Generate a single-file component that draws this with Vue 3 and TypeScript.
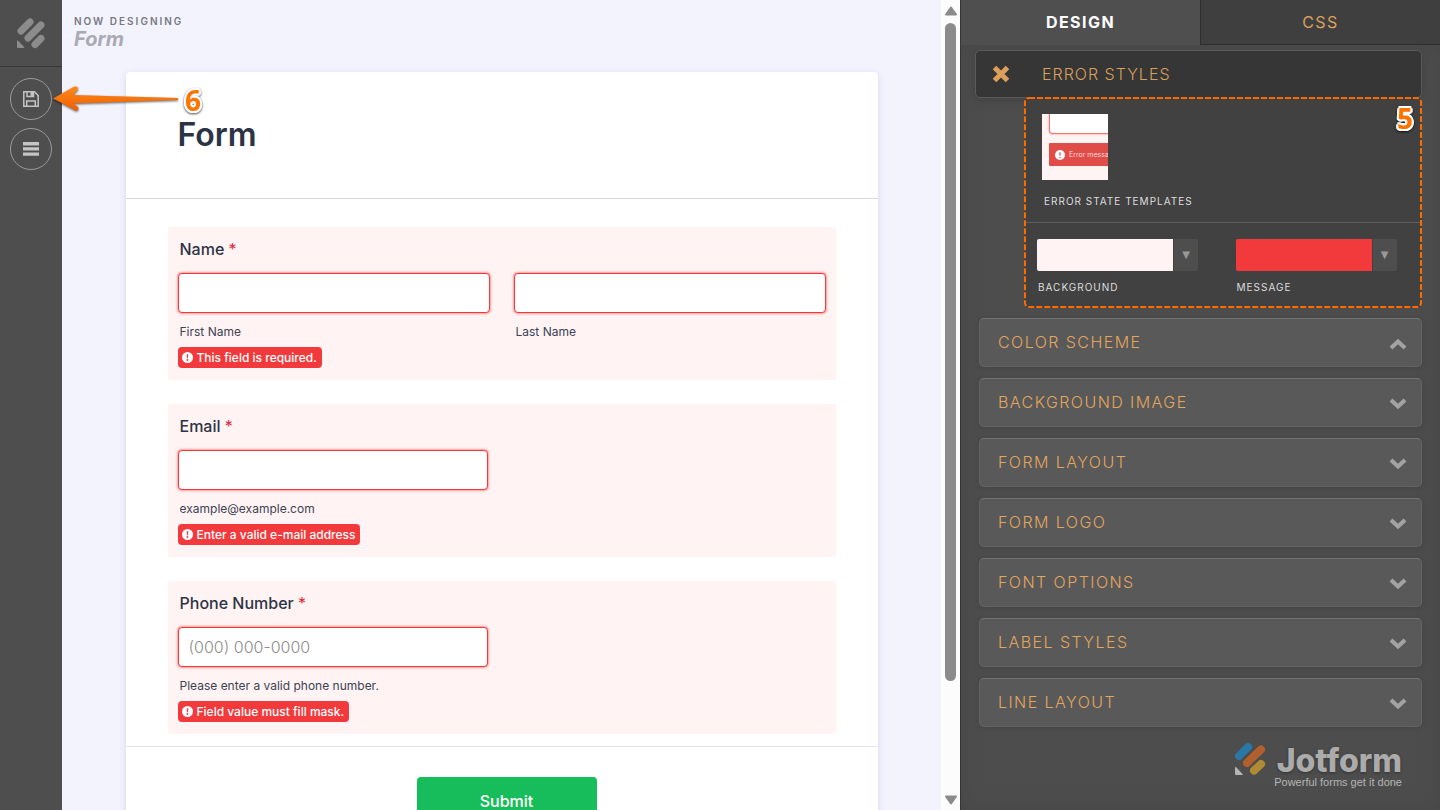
<script setup lang="ts">
import { ref } from 'vue'

interface Section {
  title: string
  open: boolean
}

const sections = ref<Section[]>([
  { title: 'Color Scheme', open: true },
  { title: 'Background Image', open: false },
  { title: 'Form Layout', open: false },
  { title: 'Form Logo', open: false },
  { title: 'Font Options', open: false },
  { title: 'Label Styles', open: false },
  { title: 'Line Layout', open: false },
])

interface Field {
  id: string
  label: string
  inputs: { id: string; sub: string; placeholder: string; type: string }[]
  error: string
}

const fields: Field[] = [
  {
    id: 'name',
    label: 'Name',
    inputs: [
      { id: 'first', sub: 'First Name', placeholder: '', type: 'text' },
      { id: 'last', sub: 'Last Name', placeholder: '', type: 'text' },
    ],
    error: 'This field is required.',
  },
  {
    id: 'email',
    label: 'Email',
    inputs: [{ id: 'mail', sub: 'example@example.com', placeholder: '', type: 'email' }],
    error: 'Enter a valid e-mail address',
  },
  {
    id: 'phone',
    label: 'Phone Number',
    inputs: [{ id: 'tel', sub: 'Please enter a valid phone number.', placeholder: '(000) 000-0000', type: 'tel' }],
    error: 'Field value must fill mask.',
  },
]
</script>

<template>
  <div class="app">
    <aside class="rail">
      <a class="rail-logo" href="#" aria-label="Home">
        <svg width="30" height="32" viewBox="0 0 30 32">
          <g stroke="#8c8c8c" stroke-width="7" stroke-linecap="round">
            <path d="M5 14 14 5" />
            <path d="M12 21 25 8" />
            <path d="M19 27.500 25 21.500" />
          </g>
          <path d="M1 24.500v5.500q0 1 1 1h5.500q1.500 0 .5-1l-5.500-6q-1.500-1-1.500.5Z" fill="#8c8c8c" />
        </svg>
      </a>
      <nav class="rail-tools">
        <button class="tool" aria-label="Save">
          <svg width="18" height="18" viewBox="0 0 18 18" fill="none" stroke="#c4c4c4" stroke-width="1.500">
            <path d="M1.800 1.800h10.700l3.700 3.700v10.700H1.800Z" />
            <path d="M5 2v4.500h6.500V2M4.700 16v-5h8.600v5" />
            <path d="M8.500 2h2.500v4h-2.500Z" fill="#c4c4c4" stroke="none" />
          </svg>
        </button>
        <button class="tool" aria-label="Menu">
          <svg width="16" height="14" viewBox="0 0 16 14" fill="#c4c4c4">
            <path d="M0 0h16v3.400H0ZM0 5.200h16v3.400H0ZM0 10.400h16v3.400H0Z" />
          </svg>
        </button>
      </nav>
    </aside>

    <main class="stage">
      <header class="stage-head">
        <span class="now">NOW DESIGNING</span>
        <span class="form-name">Form</span>
      </header>
      <form class="card" novalidate @submit.prevent>
        <div class="card-head"><h1>Form</h1></div>
        <div class="fields">
          <section v-for="f in fields" :key="f.id" class="field">
            <label class="field-label" :for="f.inputs[0].id">{{ f.label }} <span class="star">*</span></label>
            <div class="inputs">
              <div v-for="i in f.inputs" :key="i.id" class="input-col" :class="{ single: f.inputs.length === 1 }">
                <input :id="i.id" :type="i.type" :placeholder="i.placeholder" />
                <label class="sub" :for="i.id">{{ i.sub }}</label>
              </div>
            </div>
            <p class="error">
              <svg width="11" height="11" viewBox="0 0 11 11">
                <circle cx="5.500" cy="5.500" r="5.500" fill="#fff" />
                <path d="M4.700 2.200h1.600L6 6.200H5Z" fill="#f23a3c" />
                <circle cx="5.500" cy="8" r=".9" fill="#f23a3c" />
              </svg>
              {{ f.error }}
            </p>
          </section>
        </div>
        <div class="card-foot"><button class="submit" type="submit">Submit</button></div>
      </form>
    </main>

    <div class="scrollbar">
      <svg width="14" height="10" viewBox="0 0 14 10"><path d="M7 1.500 12 8.500H2Z" fill="#8b8b8b" stroke="#8b8b8b" stroke-width="2" stroke-linejoin="round" /></svg>
      <div class="track"><div class="thumb"></div></div>
      <svg width="14" height="10" viewBox="0 0 14 10"><path d="M7 8.500 12 1.500H2Z" fill="#8b8b8b" stroke="#8b8b8b" stroke-width="2" stroke-linejoin="round" /></svg>
    </div>

    <aside class="panel">
      <div class="tabs">
        <button class="tab active">DESIGN</button>
        <button class="tab">CSS</button>
      </div>
      <div class="panel-body">
        <div class="error-head">
          <button class="close" aria-label="Close error styles">
            <svg width="18" height="18" viewBox="0 0 18 18" stroke="#dba05c" stroke-width="5"><path d="M2.500 2.500l13 13M15.500 2.500l-13 13" /></svg>
          </button>
          <h2>ERROR STYLES</h2>
        </div>
        <div class="error-box">
          <svg class="dashes" width="100%" height="100%"><rect class="dash-rect" x="1" y="1" rx="4" /></svg>
          <span class="step step-five">5</span>
          <div class="templates">
            <button class="thumbnail" aria-label="Error state template">
              <span class="thumb-input"></span>
              <span class="thumb-error">
                <svg width="10" height="10" viewBox="0 0 10 10"><circle cx="5" cy="5" r="5" fill="#fff" /><path d="M5 2.200v3.500M5 7v1.200" stroke="#e04c48" stroke-width="1.200" /></svg>
                Error message
              </span>
            </button>
            <span class="caption">ERROR STATE TEMPLATES</span>
          </div>
          <div class="colors">
            <div class="color">
              <button class="picker" aria-labelledby="cap-bg"><span class="swatch pale"></span><span class="arrow">▼</span></button>
              <span id="cap-bg" class="caption">BACKGROUND</span>
            </div>
            <div class="color">
              <button class="picker" aria-labelledby="cap-msg"><span class="swatch red"></span><span class="arrow">▼</span></button>
              <span id="cap-msg" class="caption">MESSAGE</span>
            </div>
          </div>
        </div>
        <div class="accordion">
          <button v-for="s in sections" :key="s.title" class="section" :aria-expanded="s.open" @click="s.open = !s.open">
            {{ s.title }}
            <svg width="18" height="12" viewBox="0 0 18 12" fill="none" stroke="#a3a3a3" stroke-width="4">
              <path :d="s.open ? 'M2 10 9 3.500l7 6.500' : 'M2 2l7 6.500L16 2'" />
            </svg>
          </button>
        </div>
        <footer class="brand">
          <svg width="32" height="34" viewBox="0 0 32 34">
            <g stroke-width="8" stroke-linecap="round">
              <path d="M5 14 14 5" stroke="#2b77a8" />
              <path d="M13 21 27 7.500" stroke="#b0602c" />
              <path d="M20 28.500 27 22" stroke="#b08a35" />
            </g>
            <path d="M1 25.500v6.500q0 1 1 1h6q1.500 0 .5-1l-6-6.500q-1.500-1-1.500 0Z" fill="#b5b5b5" />
          </svg>
          <div class="brand-text">
            <span class="wordmark">Jotform</span>
            <span class="tagline">Powerful forms get it done</span>
          </div>
        </footer>
      </div>
    </aside>

    <div class="callout">
      <svg width="128" height="30" viewBox="0 0 128 30">
        <defs>
          <linearGradient id="arrowFill" x1="0" y1="0" x2="0" y2="1">
            <stop offset="0" stop-color="#ff8a1c" />
            <stop offset="1" stop-color="#ee5f00" />
          </linearGradient>
        </defs>
        <path d="M0 17.500 21 5.800q2.500-1 3.800.8.800 1.700-.8 3.200l-4 4.200L125 17v2L20 22.500l4.500 3q1.500 1.500.6 3.200-1 1.500-3 .6Z" fill="url(#arrowFill)" />
      </svg>
      <span class="step">6</span>
    </div>
  </div>
</template>

<style>
html,
body {
  margin: 0;
  overflow: hidden;
}
</style>

<style scoped>
.app,
.app * {
  box-sizing: border-box;
}
.app {
  position: relative;
  display: flex;
  height: 100vh;
  overflow: hidden;
  background: #f3f3fe;
  font-family: Inter, 'Liberation Sans', sans-serif;
  color: #2c3345;
}
button {
  margin: 0;
  padding: 0;
  border: 0;
  background: none;
  font: inherit;
  color: inherit;
  cursor: pointer;
}
h1,
h2,
p {
  margin: 0;
}

.rail {
  width: 62px;
  flex: none;
  background: #4e4e4e;
}
.rail-logo {
  display: flex;
  justify-content: center;
  height: 67px;
  padding-top: 17px;
  border-bottom: 1px solid #383838;
}
.rail-tools {
  display: flex;
  flex-direction: column;
  align-items: center;
  gap: 8px;
  padding-top: 11px;
}
.tool {
  display: flex;
  align-items: center;
  justify-content: center;
  width: 42px;
  height: 42px;
  border: 1px solid #9a9a9a;
  border-radius: 50%;
}

.stage {
  flex: 1;
  min-width: 0;
  overflow: hidden;
}
.stage-head {
  display: flex;
  flex-direction: column;
  height: 72px;
  padding: 15px 12px 0;
}
.now {
  font-size: 10px;
  line-height: 12px;
  font-weight: 600;
  letter-spacing: 2px;
  color: #777882;
}
.form-name {
  font-size: 20px;
  line-height: 24px;
  font-weight: 700;
  font-style: italic;
  color: #a9aab2;
}
.card {
  width: calc(100% - 48px);
  max-width: 752px;
  margin: 0 auto;
  border-radius: 4px;
  background: #fff;
  box-shadow: 0 2px 6px rgba(90, 90, 190, 0.2);
}
.card-head {
  padding: 42px 52px;
  border-bottom: 1px solid #d7d8e1;
}
h1 {
  font-size: 32px;
  line-height: 42px;
  font-weight: 600;
}
.fields {
  display: flex;
  flex-direction: column;
  gap: 24px;
  padding: 28px 42px 12px;
}
.field {
  padding: 12px 10px;
  border-radius: 3px;
  background: #fff4f3;
}
.field-label {
  display: block;
  padding: 0 2px;
  margin-bottom: 14px;
  font-size: 16px;
  line-height: 20px;
  font-weight: 500;
}
.star {
  font-weight: 400;
  color: #dc2a3c;
}
.inputs {
  display: grid;
  grid-template-columns: 1fr 1fr;
  gap: 24px;
}
.single {
  width: calc(100% - 2px);
}
input {
  display: block;
  width: 100%;
  height: 40px;
  padding: 0 10px;
  border: 1px solid #f23a3c;
  border-radius: 4px;
  outline: 0;
  background: #fff;
  box-shadow: 0 0 3px #f23a3c;
  font: 300 16px Inter, sans-serif;
  color: #2c3345;
}
input::placeholder {
  color: #8d8d8d;
  opacity: 1;
}
.sub {
  display: block;
  padding: 0 2px;
  margin: 11px 0 7px;
  font-size: 12px;
  line-height: 16px;
  color: #3c4254;
}
.error {
  display: flex;
  align-items: center;
  gap: 4px;
  width: fit-content;
  padding: 0 5px 0 4px;
  border-radius: 4px;
  background: #f23a3c;
  font-size: 12px;
  line-height: 21px;
  font-weight: 500;
  color: #fff;
}
.card-foot {
  display: flex;
  justify-content: center;
  padding: 30px 42px;
  border-top: 1px solid #e3e5f5;
}
.submit {
  width: 180px;
  margin-left: 10px;
  border-radius: 4px;
  background: #18bd5b;
  font-size: 16px;
  line-height: 48px;
  font-weight: 500;
  color: #fff;
}

.scrollbar {
  display: flex;
  flex-direction: column;
  align-items: center;
  gap: 7px;
  width: 19px;
  flex: none;
  padding: 6px 0 5px;
  background: #fcfcfc;
}
.scrollbar svg {
  flex: none;
}
.track {
  flex: 1;
  width: 11px;
}
.thumb {
  height: 86%;
  border-radius: 6px;
  background: #8b8b8b;
}

.panel {
  display: flex;
  flex-direction: column;
  width: 480px;
  flex: none;
  border-left: 1px solid #353535;
  background: #4d4d4d;
}
.tabs {
  display: grid;
  grid-template-columns: 1fr 1fr;
  margin-left: -1px;
}
.tab {
  height: 45px;
  border-left: 1px solid #2f2f2f;
  border-bottom: 1px solid #2f2f2f;
  background: #3f3f3f;
  font-size: 16px;
  letter-spacing: 0.09em;
  color: #dba05c;
}
.tab.active {
  border-left-color: #353535;
  border-bottom-color: #4f4f4f;
  background: #4f4f4f;
  font-weight: 700;
  color: #fff;
}
.panel-body {
  flex: 1;
  padding: 5px 18px 0 14px;
  box-shadow: inset 0 0 20px #474747;
}
.error-head {
  display: flex;
  align-items: center;
  height: 48px;
  border: 1px solid #5a5a5a;
  border-radius: 5px;
  background: #363636;
  box-shadow: 0 3px 10px #424242;
}
.close {
  display: flex;
  width: 66px;
  padding-left: 16px;
}
h2 {
  font-size: 16px;
  font-weight: 300;
  letter-spacing: 1px;
  color: #dba05c;
}
.error-box {
  position: relative;
  margin: -1px 0 10px 49px;
  padding: 2px;
  border-radius: 5px;
  background: #414141;
}
.dashes {
  position: absolute;
  inset: 0;
}
.dash-rect {
  width: calc(100% - 2px);
  height: calc(100% - 2px);
  fill: none;
  stroke: #ff6a00;
  stroke-width: 2px;
  stroke-dasharray: 6 2;
}
.step {
  font-family: 'Open Sans', sans-serif;
  font-size: 28px;
  line-height: 36px;
  font-weight: 700;
  color: #ff7300;
  text-shadow:
    2px 0 #fff,
    -2px 0 #fff,
    0 2px #fff,
    0 -2px #fff,
    1px 2px #fff,
    -1px 2px #fff,
    1px -2px #fff,
    -1px -2px #fff,
    2px 1px #fff,
    -2px 1px #fff;
  filter: drop-shadow(0 1px 1px rgba(0, 0, 0, 0.7));
}
.step-five {
  position: absolute;
  top: 3px;
  right: 9px;
}
.templates {
  display: flex;
  flex-direction: column;
  align-items: flex-start;
  gap: 14px;
  padding: 15px 16px 14px;
  border-bottom: 1px solid #606060;
}
.templates .caption {
  padding-left: 2px;
}
.thumbnail {
  display: flex;
  flex-direction: column;
  align-items: flex-start;
  gap: 9px;
  width: 66px;
  height: 66px;
  padding-left: 7px;
  overflow: hidden;
  background: #fff4f3;
}
.thumb-input {
  width: 90px;
  height: 20px;
  border: 1px solid #ee7774;
  border-top: 0;
  border-radius: 0 0 4px 4px;
  background: #fff;
  box-shadow: 0 0 2px #ee7774;
}
.thumb-error {
  display: flex;
  align-items: center;
  gap: 4px;
  width: 90px;
  padding-left: 6px;
  border-radius: 1px;
  background: #e04c48;
  font-size: 7px;
  line-height: 23px;
  white-space: nowrap;
  color: #ffdcdb;
}
.thumb-error svg {
  flex: none;
}
.caption {
  font-size: 10px;
  line-height: 14px;
  letter-spacing: 1px;
  color: #dedede;
}
.colors {
  display: grid;
  grid-template-columns: 1fr 1fr;
  padding: 16px 0 12px 11px;
  column-gap: 14px;
}
.color {
  display: flex;
  flex-direction: column;
  gap: 9px;
}
.color .caption {
  padding-left: 1px;
}
.picker {
  display: flex;
  width: 161px;
  height: 32px;
  border-radius: 2px;
  overflow: hidden;
  background: #4e4e4e;
}
.swatch {
  flex: 1;
  border-right: 1px solid #404040;
}
.pale {
  background: #fff4f3;
}
.red {
  background: #f23a3c;
}
.arrow {
  width: 24px;
  font: 10px/32px 'DejaVu Sans', sans-serif;
  color: #999;
}
.accordion {
  display: flex;
  flex-direction: column;
  gap: 11px;
  padding-left: 4px;
}
.section {
  display: flex;
  align-items: center;
  justify-content: space-between;
  height: 49px;
  padding: 0 14px 2px 18px;
  border: 1px solid #646464;
  border-top-color: #737373;
  border-radius: 5px;
  background: #595959;
  box-shadow: 0 1px 4px #444;
  font-size: 16px;
  font-weight: 300;
  letter-spacing: 0.09em;
  text-transform: uppercase;
  color: #e3a65e;
}
.section svg {
  margin-top: 5px;
}
.brand {
  display: flex;
  justify-content: flex-end;
  gap: 8px;
  padding: 15px 20px 0 0;
}
.brand svg {
  flex: none;
}
.brand-text {
  display: flex;
  flex-direction: column;
  align-items: flex-end;
}
.wordmark {
  padding-top: 5px;
  font-size: 32px;
  line-height: 28px;
  font-weight: 800;
  color: #ababab;
  text-shadow: 0 1px 3px #333;
}
.tagline {
  font: 11px/14px 'Liberation Sans', sans-serif;
  color: #b5b5b5;
}

.callout {
  position: absolute;
  top: 81px;
  left: 53px;
  display: flex;
  align-items: center;
  gap: 4px;
}
.callout svg {
  margin-bottom: 8px;
  filter: drop-shadow(0 1px 1px rgba(0, 0, 0, 0.6));
}
</style>
